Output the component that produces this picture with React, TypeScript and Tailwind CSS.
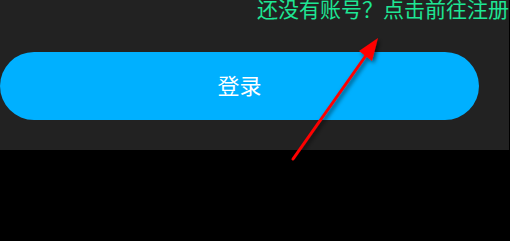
export default function App() {
  return (
    <div className="relative w-[510px] h-[241px] bg-black overflow-hidden" style={{ fontFamily: '"Noto Sans CJK SC", "Noto Sans", sans-serif' }}>
      <div className="w-[509px] h-[150px] bg-[#222222] flex flex-col">
        <div className="flex justify-end -mt-[2px]">
          <span className="text-[21px] leading-[21px] text-[#1ee694]">还没有账号？点击前往注册</span>
        </div>
        <button className="mt-[33px] w-[479px] h-[68px] rounded-full bg-[#00b0ff] text-white text-[22px] flex items-center justify-center pb-[3px]">
          登录
        </button>
      </div>

      {/* annotation arrow */}
      <svg className="absolute inset-0 pointer-events-none" width="510" height="241" viewBox="0 0 510 241">
        <defs>
          <filter id="sh" x="-50%" y="-50%" width="200%" height="200%">
            <feDropShadow dx="2" dy="2" stdDeviation="2" floodColor="#000" floodOpacity="0.6" />
          </filter>
        </defs>
        <g filter="url(#sh)">
          <line x1="293" y1="159" x2="367" y2="54" stroke="#ff0000" strokeWidth="3" strokeLinecap="round" />
          <polygon points="378,38 359,51 372,61" fill="#ff0000" />
        </g>
      </svg>
    </div>
  );
}
